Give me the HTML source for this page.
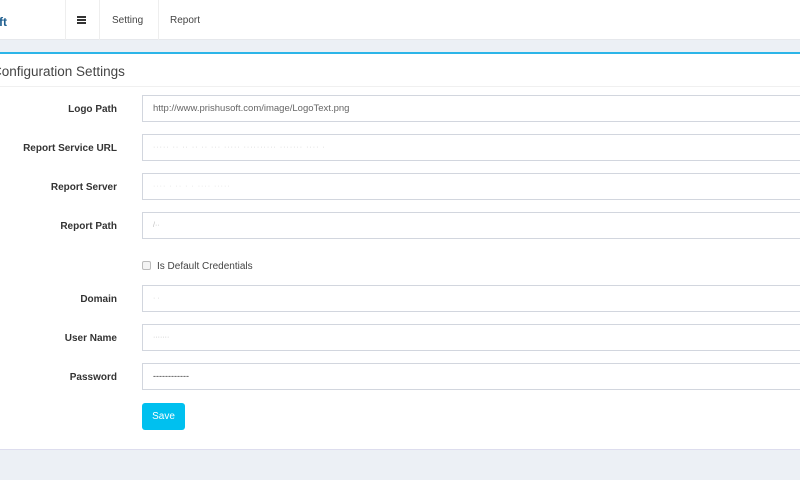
<!DOCTYPE html>
<html><head><style>
*{box-sizing:border-box;margin:0;padding:0}
body{width:800px;height:480px;overflow:hidden;background:#ecf0f5;font-family:"Liberation Sans",sans-serif;font-size:10px;color:#333;position:relative}
.hdr{position:absolute;left:0;top:0;width:800px;height:40px;background:#fff;border-bottom:1px solid #e6e8ec}
.logo{position:absolute;left:-1px;top:15px;font-weight:bold;font-size:12px;color:#1f5f8f}
.sep{position:absolute;top:0;width:1px;height:40px;background:#eee}
.nav{position:absolute;top:15px;font-size:10px;color:#444}
.box{position:absolute;left:0;top:52px;width:800px;height:398px;background:#fff;border-top:2px solid #2cb5e8;border-bottom:1px solid #dde}
.title{position:absolute;left:-8px;top:10px;font-size:13.5px;color:#444}
.tl{position:absolute;left:0;top:32px;width:800px;height:1px;background:#f0f0f0}
.lbl{position:absolute;right:683px;font-weight:bold;font-size:10px;color:#333;text-align:right;white-space:nowrap}
.in{position:absolute;left:142px;width:670px;height:27px;border:1px solid #d2d6de;padding:0 10px;line-height:25px;font-size:9.5px;color:#666}
.btn{position:absolute;left:142px;top:349px;width:43px;height:27px;background:#00c0ef;border-radius:3px;color:#fff;font-size:10px;text-align:center;line-height:27px}
.hb{position:absolute;left:77px;width:9px;height:2px;background:#333}
</style></head><body>
<div class="hdr">
<div class="logo">ft</div>
<div class="sep" style="left:65px"></div>
<div class="sep" style="left:99px"></div>
<div class="sep" style="left:158px"></div>
<div class="hb" style="top:16px"></div><div class="hb" style="top:19px"></div><div class="hb" style="top:22px"></div>
<div class="nav" style="left:112px">Setting</div>
<div class="nav" style="left:170px">Report</div>
</div>
<div class="box">
<div class="title">Configuration Settings</div>
<div class="tl"></div>
<div class="lbl" style="top:50px">Logo Path</div><div class="in" style="top:41px">http://www.prishusoft.com/image/LogoText.png</div>
<div class="lbl" style="top:89px">Report Service URL</div><div class="in" style="top:80px;color:#ccc;font-size:7px;letter-spacing:1px">····· ·· ·· ·· ·· ··· ····· ·········· ······· ···· ·</div>
<div class="lbl" style="top:128px">Report Server</div><div class="in" style="top:119px;color:#ddd;font-size:7px;letter-spacing:1px">···· · ·· · · ···· ·····</div>
<div class="lbl" style="top:167px">Report Path</div><div class="in" style="top:158px;color:#bbb;font-size:7px">/··</div>
<div style="position:absolute;left:142px;top:207px;width:9px;height:9px;border:1px solid #bbb;border-radius:2px;background:#f4f4f4"></div>
<div style="position:absolute;left:157px;top:207px;font-size:10px;color:#444">Is Default Credentials</div>
<div class="lbl" style="top:240px">Domain</div><div class="in" style="top:231px;color:#ccc;font-size:7px">· ·</div>
<div class="lbl" style="top:279px">User Name</div><div class="in" style="top:270px;color:#bbb;font-size:7px">·······</div>
<div class="lbl" style="top:318px">Password</div><div class="in" style="top:309px;color:#333;font-size:9px">------------</div>
<div class="btn">Save</div>
</div>
</body></html>
